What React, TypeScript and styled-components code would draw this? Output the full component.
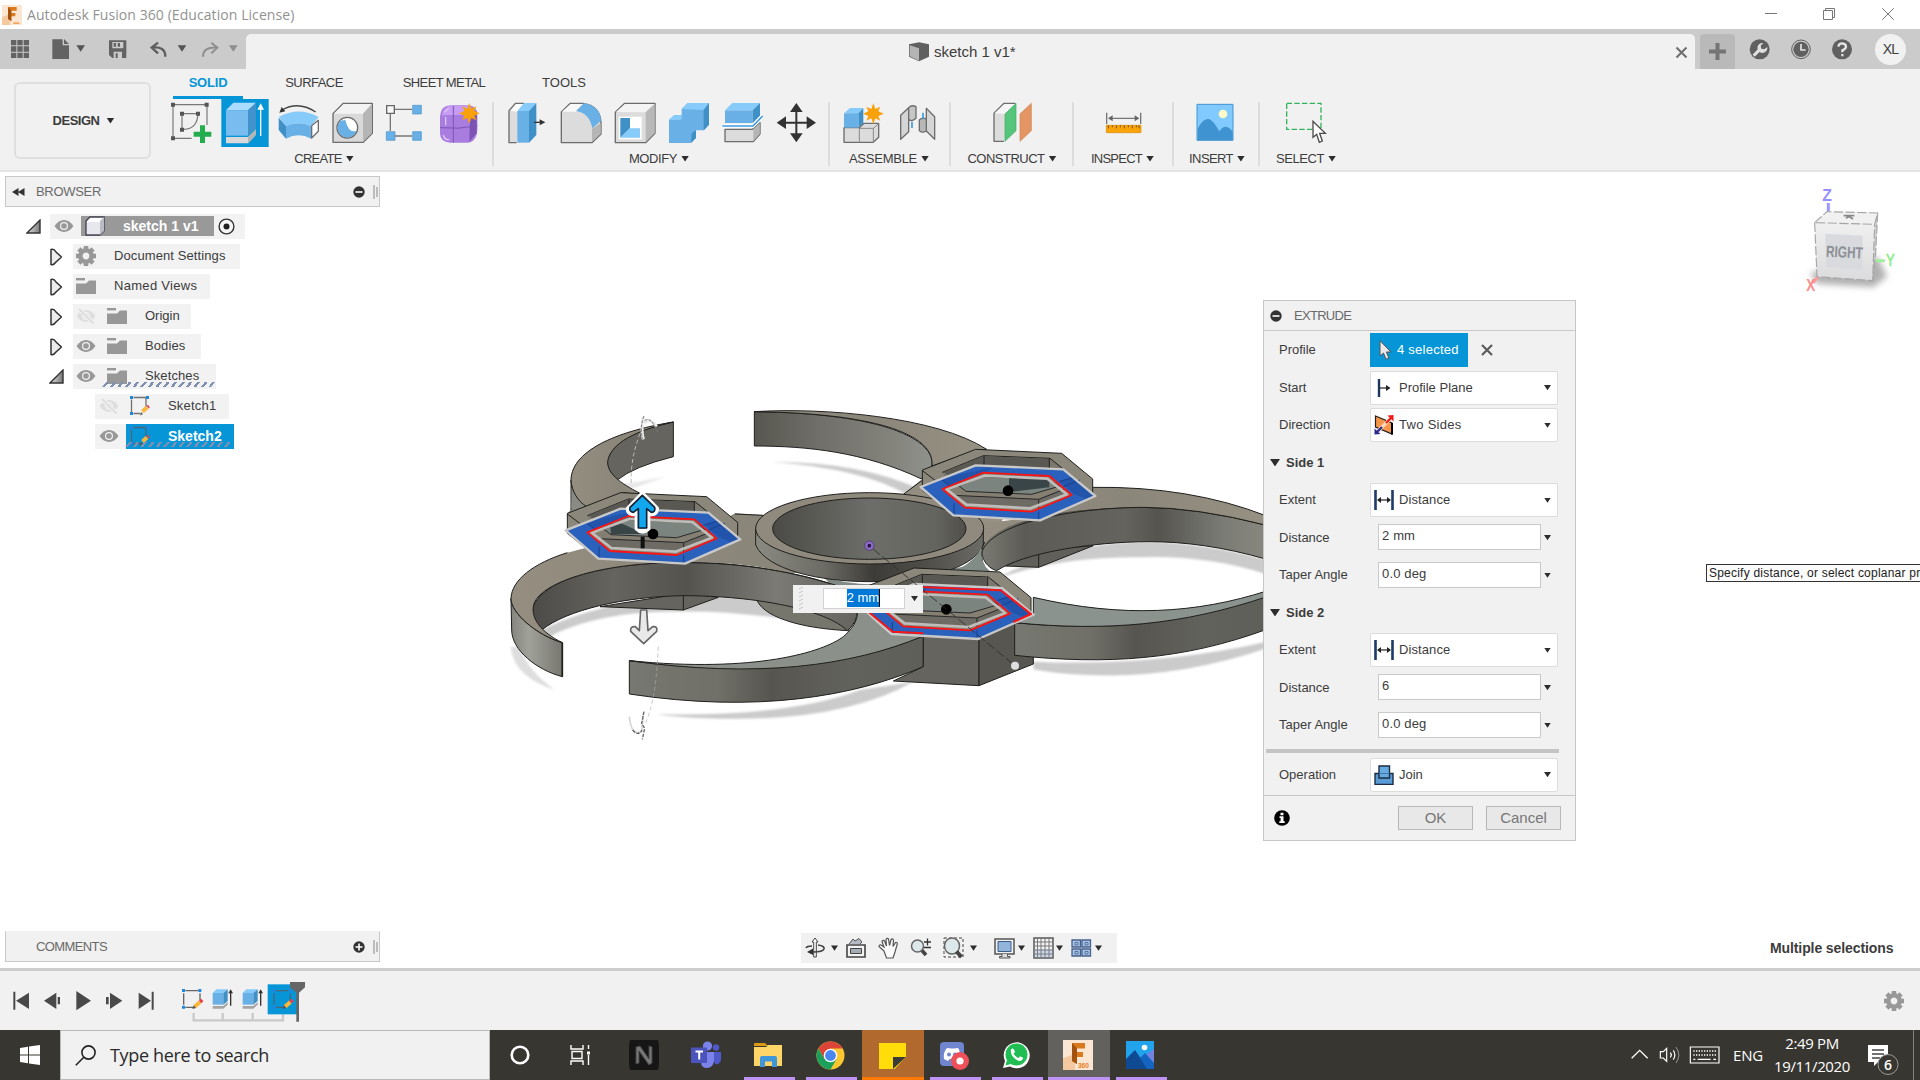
import React from "react";
import styled, { createGlobalStyle, css } from "styled-components";

const Global = createGlobalStyle`
  * { box-sizing: border-box; }
  html, body { margin: 0; padding: 0; overflow: hidden; background: #fff; }
  body { font-family: "Liberation Sans", Arial, sans-serif; font-size: 13px; color: #3c3c3c; }
  svg { display: block; flex: none; }
`;

const blue = "#0696d7";

const Screen = styled.div`
  width: 1920px;
  height: 1080px;
  display: flex;
  flex-direction: column;
  overflow: hidden;
  background: #fff;
`;

const Spring = styled.div`
  flex: 1;
`;

const Gap = styled.div<{ $w: number }>`
  width: ${(p) => p.$w}px;
  flex: none;
`;

const Label = styled.span<{ $size?: number; $track?: number; $bold?: boolean; $color?: string }>`
  font-size: ${(p) => p.$size ?? 13}px;
  letter-spacing: ${(p) => p.$track ?? 0}px;
  font-weight: ${(p) => (p.$bold ? 700 : 400)};
  color: ${(p) => p.$color ?? "#3c3c3c"};
  white-space: nowrap;
  line-height: 1.2;
`;

const Caret = styled.i<{ $s?: number; $color?: string }>`
  flex: none;
  width: ${(p) => (p.$s ?? 3.5) * 2}px;
  height: ${(p) => (p.$s ?? 3.5) * 1.5}px;
  background: ${(p) => p.$color ?? "#2d2d2d"};
  clip-path: polygon(0 0, 100% 0, 50% 100%);
`;

/* Title bar */

const TitleBar = styled.header`
  height: 29px;
  flex: none;
  display: flex;
  align-items: center;
  padding-left: 2px;
  background: #fff;
`;

const TitleText = styled.span`
  margin-left: 5px;
  font: 14px "Open Sans", sans-serif;
  letter-spacing: 0.07px;
  color: #929292;
  white-space: nowrap;
`;

/* Application bar */

const AppBar = styled.div`
  height: 40px;
  flex: none;
  display: flex;
  background: #cbcbcb;
`;

const QuickAccess = styled.div`
  width: 246px;
  height: 40px;
`;

const DocTab = styled.div`
  width: 1449px;
  margin-top: 5px;
  height: 35px;
  display: flex;
  align-items: center;
  padding: 1px 7px 0 663px;
  background: #f1f1f1;
  border-radius: 5px 5px 0 0;
`;

const NewTab = styled.div`
  width: 35px;
  height: 35px;
  margin: 5px 0 0 5px;
  border-radius: 4px 4px 0 0;
  background: #b9b9b9;
  display: grid;
  place-items: center;
`;

const AppIcons = styled.div`
  display: flex;
  align-items: center;
  padding-left: 14px;
`;

const Avatar = styled.div`
  width: 31px;
  height: 31px;
  margin-left: 21px;
  border-radius: 50%;
  background: #f1f1f1;
  display: grid;
  place-items: center;
`;

/* Ribbon */

const Ribbon = styled.section`
  height: 103px;
  flex: none;
  display: flex;
  background: #f1f1f1;
  border-bottom: 2px solid #e4e4e4;
`;

const Workspace = styled.button`
  width: 137px;
  height: 77px;
  margin: 13px 12px 0 14px;
  padding: 0 0 0 2px;
  border: 2px solid #dfdfdf;
  border-radius: 6px;
  background: #f1f1f1;
  display: flex;
  align-items: center;
  justify-content: center;
  gap: 7px;
  font-family: inherit;
`;

const RibbonMain = styled.div`
  display: flex;
  flex-direction: column;
`;

const TabRow = styled.nav`
  display: flex;
  height: 30px;
`;

const RibbonTab = styled.div<{ $w: number; $on?: boolean }>`
  width: ${(p) => p.$w}px;
  height: 30px;
  display: flex;
  justify-content: center;
  padding-top: 6px;
  ${(p) =>
    p.$on &&
    css`
      margin-left: 10px;
      border-bottom: 3px solid ${blue};
    `}
`;

const Groups = styled.div`
  display: flex;
  height: 71px;
  padding-left: 1px;
`;

const Group = styled.div<{ $w: number }>`
  width: ${(p) => p.$w}px;
  display: flex;
  flex-direction: column;
  align-items: center;
`;

const Tools = styled.div`
  display: flex;
  height: 48px;
`;

const GroupName = styled.div<{ $shift?: number }>`
  display: flex;
  align-items: center;
  gap: 4px;
  height: 25px;
  transform: translateX(${(p) => p.$shift ?? 0}px);
`;

const Divider = styled.div<{ $m: string }>`
  width: 2px;
  height: 64px;
  margin: ${(p) => p.$m};
  background: #dddddd;
`;

/* Canvas */

const Canvas = styled.main`
  position: relative;
  height: 796px;
  flex: none;
  background: #fff;
`;

const Overlay = styled.div<{ $x: number; $y: number }>`
  position: absolute;
  left: ${(p) => p.$x}px;
  top: ${(p) => p.$y}px;
`;

const PanelBar = styled.div<{ $open?: boolean }>`
  width: 375px;
  height: 31px;
  display: flex;
  align-items: center;
  padding: 0 1px 0 6px;
  background: #f1f1f1;
  border: 1px solid #c8c8c8;
  border-top-color: ${(p) => (p.$open ? "#f1f1f1" : "#c8c8c8")};
`;

const Tree = styled.div`
  display: flex;
  flex-direction: column;
  gap: 5px;
  padding-top: 7px;
`;

const TreeRow = styled.div<{ $pad: number }>`
  height: 25px;
  display: flex;
  padding-left: ${(p) => p.$pad}px;
`;

const TreeToggle = styled.div`
  width: 24px;
  display: flex;
  align-items: center;
`;

const TreeItem = styled.div<{ $w: number; $fill?: string; $in?: number }>`
  width: ${(p) => p.$w}px;
  display: flex;
  align-items: center;
  padding: 0 0 1px ${(p) => p.$in ?? 4}px;
  background: ${(p) => p.$fill ?? "#f2f2f2"};
  position: relative;
`;

const TreeName = styled.div<{ $fill?: string; $w?: number; $h?: number }>`
  height: ${(p) => p.$h ?? 24}px;
  ${(p) => p.$w && `width: ${p.$w}px;`}
  display: flex;
  align-items: center;
  gap: 18px;
  padding-left: ${(p) => (p.$fill ? 4 : 0)}px;
  background: ${(p) => p.$fill ?? "transparent"};
`;

const Hatch = styled.i<{ $x: number; $w: number }>`
  position: absolute;
  left: ${(p) => p.$x}px;
  bottom: 2px;
  width: ${(p) => p.$w}px;
  height: 5px;
  transform: skewX(-38deg);
  background: repeating-linear-gradient(90deg, #7f8fb0 0 3px, transparent 3px 7.6px);
`;

/* Extrude dialog */

const Dialog = styled.section`
  width: 313px;
  height: 541px;
  background: #f1f1f1;
  border: 1px solid #c6c6c6;
  display: flex;
  flex-direction: column;
`;

const DialogHead = styled.div`
  height: 30px;
  margin-bottom: 0.4px;
  display: flex;
  align-items: center;
  gap: 12px;
  padding-left: 6px;
  border-bottom: 1px solid #c8c8c8;
`;

const Field = styled.div`
  height: 37.5px;
  display: flex;
  align-items: center;
  padding-left: 15px;
`;

const FieldName = styled.div`
  width: 91px;
`;

const SectionHead = styled(Field)`
  padding-left: 6px;
  gap: 6px;
`;

const Select = styled.div`
  width: 188px;
  height: 34px;
  display: flex;
  align-items: center;
  justify-content: space-between;
  padding: 0 6px 0 3px;
  background: #fff;
  border: 1px solid #dcdcdc;
  border-radius: 2px;
`;

const SelectValue = styled.div`
  display: flex;
  align-items: center;
  gap: 5px;
`;

const Input = styled.div`
  width: 163px;
  height: 26px;
  margin: 0 3px 1px 8px;
  padding: 3px 0 0 3px;
  background: #fff;
  border: 1px solid #cacaca;
`;

const Picked = styled.div`
  width: 98px;
  height: 34px;
  margin-right: 13px;
  display: flex;
  align-items: center;
  gap: 5px;
  padding-left: 8px;
  background: ${blue};
`;

const Rule = styled.div`
  width: 293px;
  height: 4px;
  margin: 5px 0 3px 2px;
  background: #c4c4c4;
`;

const DialogFoot = styled.div`
  flex: 1;
  margin-top: 1.6px;
  display: flex;
  align-items: center;
  padding: 0 14px 0 10px;
  border-top: 1px solid #c8c8c8;
`;

const Button = styled.button`
  width: 75px;
  height: 24px;
  margin-left: 13px;
  padding: 0;
  border: 1px solid #b8b8b8;
  background: #e8e8e8;
  font: 15px "Liberation Sans", Arial, sans-serif;
  color: #777;
`;

const Hint = styled.div`
  width: 220px;
  height: 18px;
  padding: 1px 0 0 2px;
  border: 1px solid #333;
  background: #fbfbfb;
  white-space: nowrap;
  font-size: 12px;
  letter-spacing: 0.22px;
  line-height: 15px;
  color: #222;
`;

const MiniInput = styled.div`
  width: 130px;
  height: 28px;
  display: flex;
  align-items: center;
  padding: 0 0 1px 5px;
  background: #f1f1f1;
`;

const MiniField = styled.div`
  width: 82px;
  height: 21px;
  margin: 0 6px 0 19px;
  display: flex;
  justify-content: flex-end;
  padding: 0 24px 0 0;
  background: #fff;
  border: 1px solid #d2d2d2;
`;

const Marked = styled.span`
  height: 18px;
  background: #0078d7;
  border-right: 1px solid #000;
  color: #fff;
  font-size: 13px;
  letter-spacing: -0.05px;
  line-height: 18px;
`;

const NavBar = styled.div`
  width: 316px;
  height: 30px;
  display: flex;
  align-items: center;
  padding-left: 3px;
  background: #f1f1f1;
`;

const Timeline = styled.section`
  height: 62px;
  flex: none;
  display: flex;
  border-top: 3px solid #cdcdcd;
  background: #f1f1f1;
`;

/* Taskbar */

const Taskbar = styled.footer`
  height: 50px;
  flex: none;
  display: flex;
  background: #383631;
`;

const Start = styled.div`
  width: 60px;
  display: grid;
  place-items: center;
`;

const Search = styled.div`
  width: 430px;
  height: 50px;
  display: flex;
  align-items: center;
  gap: 14px;
  padding-left: 14px;
  background: #f1f1f1;
  border: 1px solid #b9b9b9;
  font: 18px "Open Sans", sans-serif;
  letter-spacing: -0.35px;
  color: #2a2a2a;
`;

const TaskButton = styled.div<{ $fill?: string; $bar?: string; $w?: number }>`
  width: 62px;
  height: 50px;
  padding-right: 2px;
  display: grid;
  place-items: center;
  background: linear-gradient(${(p) => p.$bar ?? "transparent"}, ${(p) => p.$bar ?? "transparent"}) center bottom /
    ${(p) => p.$w ?? 51}px 3px no-repeat ${(p) => p.$fill ?? "transparent"};
`;

const Tray = styled.div`
  display: flex;
  align-items: center;
  font: 15px "Open Sans", sans-serif;
  color: #fff;
`;

const TrayIcons = styled(Tray)`
  width: 92px;
`;

const Language = styled.span`
  width: 41px;
  padding-left: 10px;
  white-space: nowrap;
  letter-spacing: -0.2px;
`;

const Clock = styled.div`
  width: 96px;
  text-align: center;
  font-size: 15px;
  line-height: 23px;
  letter-spacing: -0.35px;
`;

type PicProps = { x: number; y: number; w: number; h: number; children: React.ReactNode };

/* Drawings share a grid of three units to the pixel. */
const Pic = ({ x, y, w, h, children }: PicProps) => (
  <svg width={w} height={h} viewBox={`${x} ${y} ${w * 3} ${h * 3}`} fill="none">
    {children}
  </svg>
);

const Tool = ({ x, children }: { x: number; children: React.ReactNode }) => (
  <Pic x={x} y={297} w={54} h={48}>
    {children}
  </Pic>
);

const Burst = ({ x, y }: { x: number; y: number }) => (
  <path
    transform={`translate(${x} ${y})`}
    fill="#f9a10a"
    d="M0-31 6-14 21-21 15-7 31 0 15 7 21 21 6 14 0 31-6 14-21 21-15 7-31 0-15-7-21-21-6-14Z"
  />
);

const line = { stroke: "#6d6d6d", strokeWidth: 4, strokeLinejoin: "round" as const };

const CreateTools = () => (
  <Tools>
    <Tool x={492}>
      <path d="M519 314H621V375M519 314V415H575M546 341H594M546 341V388M594 341Q592 386 552 388" stroke="#777" strokeWidth="3.5" />
      <path d="M513 308h12v12h-12zM614 308h12v12h-12zM513 409h12v12h-12zM540 335h12v12h-12zM588 335h12v12h-12zM540 383h12v12h-12z" fill="#555" />
      <path d="M600 376h15v19h19v15h-19v19h-15v-19h-19v-15h19z" fill="#23ad4e" />
    </Tool>
    <Tool x={654}>
      <path d="M664 290H806V441H664z" fill={blue} />
      <path d="M678 411H744L768 388V404L744 430H678z" fill="#d9d9d9" />
      <path d="M744 411 768 388V404L744 430z" fill="#b4b4b4" />
      <path d="M678 331H744V407H678z" fill="#79bdf0" />
      <path d="M678 331 700 308H768L744 331z" fill="#aadcff" />
      <path d="M744 331 768 308V385L744 407z" fill="#4292cc" />
      <path d="M782 408V318" stroke="#fff" strokeWidth="4" />
      <path d="M782 310 792 329H772z" fill="#fff" />
    </Tool>
    <Tool x={816}>
      <path d="M836 351Q896 318 956 351L933 378Q896 362 858 378z" fill="#86cbfa" />
      <path d="M858 378Q896 362 933 378V416Q896 396 858 416z" fill="#68b0e5" />
      <path d="M836 353 858 378V416L836 390z" fill="#4090c8" />
      <path d="M935 377 955 361V394L935 414z" fill="#fff" {...line} />
      <path d="M846 330Q895 302 947 336" stroke="#444" strokeWidth="4" />
      <path d="M838 338 845 321 856 334z" fill="#333" />
    </Tool>
    <Tool x={978}>
      <path d="M999 341 1030 310H1117V400L1090 427H999z" fill="#d9d9d9" {...line} />
      <path d="M1001 341 1031 312H1115L1088 341z" fill="#f3f3f3" />
      <path d="M1089 341 1116 312V399L1089 426z" fill="#b5b5b5" />
      <circle cx="1042" cy="383" r="31" fill="#fff" {...line} />
      <path d="M1022 362A29 29 0 1 0 1069 393Q1045 400 1036 360Z" fill="#68b0e5" />
    </Tool>
    <Tool x={1140}>
      <path d="M1184 328H1236M1171 342V393M1185 408H1236" stroke="#777" strokeWidth="4" />
      <path d="M1160 317h23v23h-23z" fill="#f8f8f8" stroke="#666" strokeWidth="4" />
      <path d="M1238 316h26v26h-26zM1159 395h26v26h-26zM1238 395h26v26h-26z" fill="#68b0e5" stroke="#4593ca" strokeWidth="2" />
    </Tool>
    <Tool x={1302}>
      <path d="M1320 348Q1323 316 1352 316H1404Q1432 318 1432 345V390Q1429 427 1402 428H1350Q1320 426 1320 400Z" fill="#a97de0" />
      <path d="M1326 347Q1330 318 1354 317H1400Q1420 320 1416 330L1405 345H1336z" fill="#c79cf4" />
      <path d="M1411 350 1430 333V400L1408 425z" fill="#7c53b4" />
      <path d="M1360 318V428M1320 383Q1375 389 1432 377M1411 340V408" stroke="#7c53b4" strokeWidth="3" />
      <path d="M1337 350v26M1330 405q3 15 18 14M1347 325l-14 12" stroke="#e0c4ff" strokeWidth="4" />
      <Burst x={1408} y={340} />
    </Tool>
  </Tools>
);

const ModifyTools = () => (
  <Tools>
    <Tool x={30}>
      <path d="M80 428H57V332L76 310H102" fill="#dcdcdc" {...line} />
      <path d="M62 332 80 312H104L82 335z" fill="#fff" />
      <path d="M82 333 102 309H139L117 333z" fill="#86cbfa" />
      <path d="M82 333H117V428H82z" fill="#68b0e5" />
      <path d="M117 333 139 309V405L117 428z" fill="#4090c8" />
      <path d="M132 367H152" stroke="#333" strokeWidth="4" />
      <path d="M166 367 149 358V376z" fill="#333" />
    </Tool>
    <Tool x={192}>
      <path d="M214 336 241 310H280Q332 318 333 370V402L306 428H214z" fill="#dcdcdc" {...line} />
      <path d="M216 335 242 312H282L260 335z" fill="#f8f8f8" />
      <path d="M306 386 332 370V401L306 426z" fill="#b5b5b5" />
      <path d="M258 333 282 309Q332 320 333 362L307 385Q298 338 258 333Z" fill="#68b0e5" />
    </Tool>
    <Tool x={354}>
      <path d="M376 337 404 310H495V400L467 428H376z" fill="#dcdcdc" {...line} />
      <path d="M378 336 405 312H493L466 337z" fill="#f4f4f4" />
      <path d="M467 337 494 312V400L467 426z" fill="#b8b8b8" />
      <path d="M386 350h69v68h-69z" fill="#fff" />
      <path d="M391 354h29v31l-29 28z" fill="#4090c8" />
      <path d="M420 385h30v28h-59z" fill="#86cbfa" />
    </Tool>
    <Tool x={516}>
      <path d="M537 360 552 346H575V327L593 309H657V374L642 391H618V414L602 429H537z" fill="#68b0e5" />
      <path d="M537 360 552 346H577L573 360zM575 327 593 309H657L641 330z" fill="#86cbfa" />
      <path d="M641 330 657 310V374L641 391zM605 400 618 391V414L603 429z" fill="#4090c8" />
    </Tool>
    <Tool x={678}>
      <path d="M705 331 727 309H810L788 331z" fill="#86cbfa" />
      <path d="M705 331H788V369H705z" fill="#68b0e5" />
      <path d="M788 331 810 309V347L788 369z" fill="#4090c8" />
      <path d="M705 388H788L810 368V402L790 425H705z" fill="#dcdcdc" {...line} />
      <path d="M790 388 809 369V402L790 424z" fill="#b5b5b5" />
      <path d="M697 378H789L818 348" stroke="#fff" strokeWidth="11" />
      <path d="M697 378H789L818 348" stroke="#3d9be0" strokeWidth="5" />
    </Tool>
    <Tool x={840}>
      <path d="M919 325V412M876 368H962" stroke="#333" strokeWidth="6" />
      <path d="M919 309 938 336H900zM919 427 938 400H900zM860 368 888 349V387zM978 368 950 349V387z" fill="#333" />
    </Tool>
  </Tools>
);

const AssembleTools = () => (
  <Tools>
    <Tool x={1038}>
      <path d="M1062 383H1108L1122 370H1166V412L1150 427H1062z" fill="#dcdcdc" {...line} />
      <path d="M1108 384V427M1108 385H1150L1166 371M1150 385V427" stroke="#888" strokeWidth="3" />
      <path d="M1062 340 1080 324H1120L1106 342z" fill="#86cbfa" />
      <path d="M1062 340H1106V383H1062z" fill="#68b0e5" />
      <path d="M1106 340 1120 324V370L1106 383z" fill="#4090c8" />
      <Burst x={1150} y={341} />
    </Tool>
    <Tool x={1200}>
      <path d="M1232 346 1256 323V395L1232 418z" fill="#d5d5d5" {...line} />
      <path d="M1256 323Q1265 313 1278 320V355Q1267 366 1256 359z" fill="#c6c6c6" {...line} />
      <path d="M1309 325 1334 350V418L1309 393z" fill="#d5d5d5" {...line} />
      <path d="M1288 360Q1298 350 1309 358V393Q1298 400 1288 392z" fill="#b8b8b8" {...line} />
      <path d="M1266 365V384M1299 338V358" stroke="#3d9be0" strokeWidth="5" />
    </Tool>
  </Tools>
);

const Eye = ({ off }: { off?: boolean }) => (
  <svg width="20" height="16" viewBox="0 0 20 16">
    <path d="M.5 8Q4.500 2.200 10 2 15.500 2.200 19.500 8 15.500 13.800 10 14 4.500 13.800.5 8Z" fill={off ? "#dedede" : "#989898"} />
    <circle cx="10" cy="8" r="4" fill="#f2f2f2" />
    <circle cx="10" cy="8" r="2.800" fill={off ? "#dedede" : "#989898"} />
    {off && <path d="M2 0 18 16" stroke="#f2f2f2" strokeWidth="4" />}
    {off && <path d="M3 1 17.500 15.500" stroke="#dedede" strokeWidth="2" />}
  </svg>
);

const Folder = () => (
  <svg width="20" height="16" viewBox="0 0 20 16">
    <path d="M0 5.500H10L13 2.500H20V16H0z" fill="#989898" />
    <path d="M0 1.200H9" stroke="#989898" strokeWidth="2.400" />
  </svg>
);

const GearShape = () => (
  <>
    {[0, 45, 90, 135].map((a) => (
      <path key={a} d="M-2.300-10H2.300V10H-2.300z" fill="#989898" transform={`rotate(${a})`} />
    ))}
    <circle r="5.600" stroke="#989898" strokeWidth="4.400" fill="#f1f1f1" />
  </>
);

const Gear = () => (
  <svg width="20" height="20" viewBox="-10 -10 20 20">
    <GearShape />
  </svg>
);

const SketchIcon = ({ sel }: { sel?: boolean }) => (
  <svg width="20" height="20" viewBox="0 0 20 20" fill="none">
    <path d="M3.500 1.500H16V11M1.500 3.500V16.500M3.500 17.500H10" stroke={sel ? "#47687c" : "#707070"} strokeWidth="1.300" />
    <path d="M0 0h3v3H0zM16 0h3v3h-3zM0 16h3v3H0z" fill="#2186dd" />
    <path d="M12.500 15.500 17 11.500" stroke="#fbb738" strokeWidth="4" />
    <path d="M17.500 11 19 10.200" stroke="#ec3c4a" strokeWidth="3.500" />
    <path d="M10 19.500 11 16 13 18z" fill="#555" />
  </svg>
);

const Collapsed = () => (
  <svg width="13" height="18" viewBox="0 0 13 18">
    <path d="M2 1.500Q5 .5 7 4L12.500 9 7 14Q4.500 17.500 2 16.500Z" fill="#ededed" stroke="#333" strokeWidth="1.500" />
  </svg>
);

const Expanded = () => (
  <svg width="15" height="15" viewBox="0 0 15 15">
    <defs>
      <linearGradient id="tri" x1="0" x2="1">
        <stop offset="0" stopColor="#e8e8e8" />
        <stop offset="1" stopColor="#777" />
      </linearGradient>
    </defs>
    <path d="M1 14H14V1z" fill="url(#tri)" stroke="#333" strokeWidth="1.400" />
  </svg>
);

const RoundSign = ({ plus }: { plus?: boolean }) => (
  <svg width="12" height="12" viewBox="0 0 12 12">
    <circle cx="6" cy="6" r="5.700" fill="#333" />
    <path d={plus ? "M2.500 6H9.500M6 2.500V9.500" : "M2.500 6H9.500"} stroke="#fff" strokeWidth="1.600" />
  </svg>
);

const Grip = () => (
  <svg width="5" height="14" viewBox="0 0 5 14">
    <path d="M1 0V14M4 2V12" stroke="#888" strokeWidth="1" />
  </svg>
);

const Pointer = () => (
  <svg width="14" height="20" viewBox="0 0 14 20">
    <path d="M2 .8V16L5.500 13 8 19.200 10.800 18 8.400 12H13z" fill="#e8e8e8" stroke="#555" />
  </svg>
);

const PlaneIcon = () => (
  <svg width="20" height="20" viewBox="0 0 20 20" fill="none">
    <path d="M5 1V19" stroke="#1f3558" strokeWidth="2.400" />
    <path d="M6 10H13" stroke="#222" strokeWidth="1.200" />
    <path d="M16.500 10 12 7V13z" fill="#222" />
  </svg>
);

const SpanIcon = () => (
  <svg width="20" height="20" viewBox="0 0 20 20" fill="none">
    <path d="M1.500 0V20M18.500 0V20" stroke="#1f3a66" strokeWidth="2.600" />
    <path d="M5 10H15" stroke="#222" strokeWidth="1.200" />
    <path d="M17 10 13 7V13zM3 10 7 7V13z" fill="#222" />
  </svg>
);

const SidesIcon = () => (
  <svg width="20" height="20" viewBox="0 0 20 20" fill="none">
    <path d="M1.500 1 18 8V19L1.500 12z" fill="#f79548" stroke="#222" strokeWidth="1.200" />
    <path d="M18 8V19.500" stroke="#000" strokeWidth="2" />
    <path d="M4 16 16 4" stroke="#ffd7b8" strokeWidth="3.500" />
    <path d="M12 8 17 3" stroke="#f01818" strokeWidth="2.200" />
    <path d="M19.500 0V6.500L13.500 .5z" fill="#f01818" />
    <path d="M8 12 3 17" stroke="#2a2a90" strokeWidth="2.200" />
    <path d="M.5 19.500V13.500L6.500 19z" fill="#2a2a90" />
  </svg>
);

const JoinIcon = () => (
  <svg width="20" height="20" viewBox="0 0 20 20" fill="none">
    <path d="M1 8.500H19V19.500H1z" fill="#5a9bd5" stroke="#1b2d44" strokeWidth="1.400" />
    <path d="M5 1H15.500V13H5z" fill="#67abe2" stroke="#1b2d44" strokeWidth="1.400" />
    <path d="M5 8.500H15.500" stroke="#3c78ae" />
  </svg>
);

/* Pocket with hexagonal rim; dx and dy move it from the rear pocket to each lobe. */
const HexPocket = ({ dx, dy, edge, wedge }: { dx: number; dy: number; edge?: boolean; wedge?: string }) => (
  <g transform={`translate(${1110 + dx} ${dy})`} strokeLinejoin="round">
    <path d="M187 270 347 208 605 220 698 297V345L540 420 280 405 187 330Z" fill="#8b877a" stroke="#1f1f1d" strokeWidth="3" />
    <path d="M247 277 370 227 570 235 650 300 536 360 282 346Z" fill="#7b796f" />
    <path d="M247 277 370 227 570 235 650 300" stroke="#1f1f1d" strokeWidth="3" fill="none" />
    <path d="M250 276 370 228 568 236V290L372 280 290 306z" fill="#595853" />
    <path d="M372 228V265M568 236V275M187 272 240 312" stroke="#1f1f1d" strokeWidth="3" />
    <path
      fillRule="evenodd"
      fill="#2a61bd"
      d="M183 322 347 258 610 270 705 347 540 420 280 405ZM247 327 370 278 568 288 635 345 515 395 315 383Z"
    />
    <path d="M247 300 290 285 400 262 372 280 300 308 268 318ZM598 303 640 292 705 347 680 358 640 340Z" fill="#1d4a9c" fillOpacity=".55" />
    <path d="M240 296 275 322M598 305 640 292M610 320 660 300M282 370V400M536 395V415" stroke="#173f8c" strokeWidth="3" />
    <path d="M255 328 372 286 565 294 627 344 512 388 318 377Z" fill="#857f72" />
    <path d="M297 318 368 290 562 296 600 318 515 343 318 334Z" fill="#7b847f" stroke="#26282a" strokeWidth="3" />
    {wedge && <path d={wedge} fill="#3a4547" />}
    <path d="M282 346 536 358 612 328 627 344 512 388 318 377Z" fill="#6d6b64" />
    <path d="M282 346 536 358 612 328M536 358V384" stroke="#26282a" strokeWidth="3" fill="none" />
    <path d="M182 321 347 256 610 268 706 348 540 421 280 406Z" stroke="#c9c9ca" strokeWidth="7" fill="none" />
    {edge && <path d="M190 323 348 264 607 275 698 346 645 370M190 323 283 399 375 404" stroke="#fb1414" strokeWidth="6" fill="none" />}
    <path d="M260 328 373 287 562 296 621 343 511 385 319 374Z" stroke="#bfbdb9" strokeWidth="8" fill="none" />
    <path d="M247 327 370 278 568 288 635 345 515 395 315 383Z" stroke="#fb1414" strokeWidth="5.500" fill="none" />
    <circle cx="444" cy="332" r="16" fill="#000" />
  </g>
);

const ink = { stroke: "#1f1f1d", strokeWidth: 3, strokeLinejoin: "round" as const };

const Model = () => (
  <svg width="784" height="370" viewBox="0 0 2352 1110" fill="none">
    <defs>
      <linearGradient id="wall" x1="0" x2="1">
        <stop offset="0" stopColor="#777871" />
        <stop offset=".3" stopColor="#706f68" />
        <stop offset=".48" stopColor="#57554f" />
        <stop offset=".75" stopColor="#62625c" />
        <stop offset="1" stopColor="#5e5f58" />
      </linearGradient>
      <linearGradient id="wallBack" x1="0" x2="1">
        <stop offset="0" stopColor="#57564f" />
        <stop offset=".35" stopColor="#6f6e68" />
        <stop offset=".8" stopColor="#85857e" />
        <stop offset="1" stopColor="#8f928c" />
      </linearGradient>
      <linearGradient id="wallInner" x1="0" x2="1">
        <stop offset="0" stopColor="#4c4b48" />
        <stop offset=".25" stopColor="#66645e" />
        <stop offset=".47" stopColor="#55534e" />
        <stop offset=".75" stopColor="#7b7a74" />
        <stop offset="1" stopColor="#65645e" />
      </linearGradient>
      <linearGradient id="wallRight" x1="0" x2="1">
        <stop offset="0" stopColor="#7a7a72" />
        <stop offset=".15" stopColor="#5c5b56" />
        <stop offset=".5" stopColor="#64635d" />
        <stop offset=".62" stopColor="#55544f" />
        <stop offset=".85" stopColor="#7c7c76" />
        <stop offset="1" stopColor="#88887f" />
      </linearGradient>
      <linearGradient id="bore" x1="0" x2="1">
        <stop offset="0" stopColor="#4b4a46" />
        <stop offset=".5" stopColor="#6d6e69" />
        <stop offset=".85" stopColor="#64645e" />
        <stop offset="1" stopColor="#4f4e4a" />
      </linearGradient>
      <linearGradient id="collar" x1="0" x2="1">
        <stop offset="0" stopColor="#8b8b82" />
        <stop offset=".3" stopColor="#6c6b64" />
        <stop offset=".52" stopColor="#3d3b37" />
        <stop offset=".8" stopColor="#55534e" />
        <stop offset="1" stopColor="#6c6b65" />
      </linearGradient>
      <linearGradient id="tip" x1="0" x2="1">
        <stop offset="0" stopColor="#85857d" />
        <stop offset=".35" stopColor="#a0a198" />
        <stop offset="1" stopColor="#77776f" />
      </linearGradient>
      <linearGradient id="top" x1="0" x2="1">
        <stop offset="0" stopColor="#948d80" />
        <stop offset=".5" stopColor="#8b867a" />
        <stop offset="1" stopColor="#979183" />
      </linearGradient>
      <filter id="soft" x="-5%" y="-20%" width="110%" height="140%">
        <feGaussianBlur stdDeviation="3" />
      </filter>
    </defs>

    <g fill="#cbcbcb" filter="url(#soft)">
      <path d="M850 246Q1110 245 1296 330L1250 343Q1110 265 850 246Z" />
      <path d="M380 312Q440 310 530 288Q450 320 400 332Z" fill="#e6e6e6" />
      <path d="M155 750C300 680 450 655 600 655Q680 640 800 660L870 715Q700 690 540 695C380 695 250 730 180 770Z" />
      <path d="M62 800Q70 890 195 930Q110 870 90 800Z" fill="#dedede" />
      <path d="M500 1003Q900 1010 1110 930L1270 905Q1050 1030 650 1015Q560 1012 500 1003Z" />
      <path d="M1540 585Q1750 480 2010 485Q2200 500 2330 540V583Q2150 525 1950 532Q1720 530 1540 590Z" />
      <path d="M1630 845Q2000 860 2330 785V805Q2050 900 1780 884Q1700 882 1630 868Z" />
    </g>

    {/* upper left claw */}
    <path d="M550 126V230Q430 260 382 300Q345 270 353 235Q380 160 550 126Z" fill="#65645e" {...ink} />
    <path d="M243 300Q243 345 300 385L232 402L245 385Z" fill="#8a8b84" />
    <path d="M243 300V390M243 300Q243 340 290 380" {...ink} />
    <path d="M550 126C400 150 245 205 243 300C245 335 265 365 290 380L400 338L460 345C400 315 352 285 353 245C360 190 440 150 550 126Z" fill="url(#top)" {...ink} />

    {/* upper right claw */}
    <path d="M793 95V198C950 198 1120 215 1295 297L1326 258C1335 180 1190 100 793 95Z" fill="url(#wallBack)" {...ink} />
    <path d="M793 95C1000 82 1340 110 1490 208L1460 210L1326 258C1335 170 1180 100 793 95Z" fill="url(#top)" {...ink} />

    {/* hub and lower left claw */}
    <path d="M330 680 580 690 685 652 580 640Z" fill="#66645e" {...ink} />
    <path d="M580 645V690" {...ink} />
    <path d="M797 650C810 710 930 745 1075 752L1100 700L1000 640Z" fill="#77766d" {...ink} />
    <path d="M155 750C50 640 270 548 570 548C760 545 930 580 1050 620L1103 690Q1100 730 1072 752C1010 690 800 647 580 647C400 650 230 690 155 750Z" fill="url(#wallInner)" {...ink} />
    <path d="M1000 590Q1160 640 1310 580L1480 550 1490 570 1250 600 1140 700 1100 700Z" fill="#818a85" />
    <path d="M63 655C63 700 140 765 217 788V890C140 870 65 810 65 750Z" fill="url(#tip)" {...ink} />
    <path
      d="M232 518C130 550 65 600 63 655C63 700 140 765 217 788C150 755 125 715 130 680C135 620 300 548 570 548C700 545 800 555 900 580L1250 560 1480 500 1540 416 1320 330 1297 297 1240 343 820 405 735 400 600 480 300 500Z"
      fill="url(#top)"
    />
    <path d="M232 518C130 550 65 600 63 655C63 700 140 765 217 788C150 755 125 715 130 680C135 620 300 548 570 548C760 545 930 580 1050 620M735 402 820 406M1240 343 1295 302" {...ink} />
    <path d="M217 788V890" stroke="#1f1f1d" strokeWidth="5" />

    {/* right loop */}
    <path d="M1547 558 1646 562 1810 497 1646 510Z" fill="#605f59" {...ink} />
    <path d="M1646 515V562" {...ink} />
    <path d="M1520 572C1480 560 1460 510 1490 480C1560 400 1800 382 1960 382Q2120 382 2330 436V538C2200 500 2080 485 1980 485C1800 485 1600 520 1520 572Z" fill="url(#wallRight)" {...ink} />
    <path d="M1808 322Q2100 318 2330 408V436Q2120 382 1960 382C1800 382 1560 400 1485 490L1480 430 1650 410Z" fill="url(#top)" />
    <path d="M1808 322Q2100 318 2330 408M2330 436Q2120 382 1960 382C1740 384 1500 430 1474 520Q1474 550 1490 574" {...ink} />

    {/* bearing collar */}
    <path d="M797 446V495C830 570 990 605 1140 605S1450 570 1480 495V446Z" fill="url(#collar)" {...ink} />
    <path d="M1400 570Q1460 540 1474 500Q1470 550 1500 574Z" fill="#818c86" />
    <ellipse cx="1139" cy="445" rx="342" ry="107" fill="#8f8a7d" {...ink} />
    <ellipse cx="1138" cy="446" rx="290" ry="92" fill="url(#bore)" {...ink} />

    {/* lower arm */}
    <path d="M418 842V942C800 1000 1090 950 1300 860V768C1100 850 800 895 418 842Z" fill="url(#wall)" {...ink} />
    <path d="M418 842C800 880 1000 815 1060 770C1100 735 1105 710 1102 680L1140 680 1215 755 1300 768C1080 860 800 895 418 842Z" fill="#8b908a" {...ink} />

    {/* lower right arm */}
    <path d="M1210 903 1300 860V750L1467 775V917Z" fill="#65645f" {...ink} />
    <path d="M1467 775 1630 700V852L1467 917Z" fill="#575650" {...ink} />
    <path d="M1574 728C1850 755 2080 735 2330 645V748C2080 840 1850 855 1574 826Z" fill="url(#wall)" {...ink} />
    <path d="M1630 652C1900 715 2120 700 2330 633V650C2080 735 1850 755 1574 728L1630 700Z" fill="#8b938e" {...ink} />

    <HexPocket dx={0} dy={0} wedge="M447 288 568 297V322L447 336Z" />
    <HexPocket dx={-1065} dy={130} wedge="M315 302 345 298 420 332 318 332Z" />
    <HexPocket dx={-185} dy={356} edge />

    <path d="M1148 506 1575 857" stroke="#2c2c2c" strokeWidth="2.500" strokeDasharray="28 9" />
    <circle cx="1138" cy="497" r="14" fill="#8f6ac6" />
    <circle cx="1138" cy="497" r="14" stroke="#3c2a63" strokeWidth="2" />
    <circle cx="1138" cy="497" r="5.500" fill="#20173a" />
    <circle cx="1575" cy="857" r="12" fill="#dedede" />

    {/* distance manipulators */}
    <path d="M458 470V505" stroke="#111" strokeWidth="12" />
    <path d="M457 342 500 385Q500 402 484 402L474 396V446Q457 462 441 446V396L430 402Q412 400 415 385Z" fill="#12a7ee" stroke="#fff" strokeWidth="14" strokeLinejoin="round" />
    <path d="M457 346 494 382Q497 396 484 397L470 386V444H445V386L430 397Q417 395 420 382Z" fill="#12a7ee" stroke="#123" strokeWidth="5" strokeLinejoin="round" />
    <path d="M452 690H470L474 752L488 740Q504 738 500 754L461 791 422 754Q420 738 436 740L448 752Z" fill="#e9e9e9" stroke="#666" strokeWidth="5" strokeLinejoin="round" />
    <path d="M460 110Q452 145 460 178M463 130Q480 110 500 140" stroke="#e9e9e9" strokeWidth="9" />
    <path d="M462 108Q448 145 458 176M464 122Q482 106 505 160" stroke="#777" strokeWidth="3" strokeDasharray="9 4" />
    <path d="M450 160Q420 240 424 310" stroke="#bbb" strokeWidth="3" strokeDasharray="12 8" />
    <path d="M505 800Q500 900 490 950 480 1000 466 1030" stroke="#aaa" strokeWidth="2" strokeDasharray="12 8" />
    <path d="M418 1010Q424 1070 455 1055L460 1000" stroke="#d6d6d6" strokeWidth="5" />
    <path d="M462 995 455 1030 464 1045 457 1078M428 1050Q445 1070 456 1050" stroke="#666" strokeWidth="4" strokeDasharray="10 4" />
  </svg>
);

const ViewCube = () => (
  <Pic x={1130} y={550} w={110} h={120}>
    <defs>
      <linearGradient id="cubeFace" x1="0" x2="0" y1="0" y2="1">
        <stop offset="0" stopColor="#f0f0f0" />
        <stop offset="1" stopColor="#dbdbdd" />
      </linearGradient>
      <filter id="cubeShadow" x="-20%" y="-40%" width="140%" height="180%">
        <feGaussianBlur stdDeviation="10" />
      </filter>
    </defs>
    <path d="M1170 820 1370 770 1400 830 1360 862 1190 852Z" fill="#b0b0b0" filter="url(#cubeShadow)" />
    <path d="M1183 669 1220 636 1372 640 1363 674Z" fill="#f1f1f1" />
    <path d="M1363 674 1372 640 1366 760 1357 843Z" fill="#cfcfcf" />
    <path d="M1183 669 1363 674 1357 843 1190 831Z" fill="url(#cubeFace)" />
    <path d="M1215 702 1327 708 1325 811 1218 802Z" fill="#d8dade" />
    <path d="M1183 669 1220 636 1372 640 1363 674ZM1183 669 1190 831 1357 843 1363 674M1372 640 1366 760 1357 843" stroke="#a6a6a6" strokeWidth="3.500" strokeDasharray="28 7" />
    <path d="M1270 648H1302M1277 656 1285 650 1298 658" stroke="#888" strokeWidth="5" />
    <path d="M1224 610V634" stroke="#9c96ff" strokeWidth="9" />
    <path d="M1366 783H1394" stroke="#9df09a" strokeWidth="8" />
    <path d="M1192 833 1178 849" stroke="#f99" strokeWidth="9" />
    <g fontFamily="Liberation Sans" fontWeight="700">
      <text x="1216" y="771" fontSize="48" fill="#8d9096" textLength="111" lengthAdjust="spacingAndGlyphs" transform="rotate(3 1216 771)">RIGHT</text>
      <text x="1206" y="605" fontSize="51" fill="#958fff" textLength="29" lengthAdjust="spacingAndGlyphs">Z</text>
      <text x="1397" y="799" fontSize="50" fontWeight="400" fill="#8bed88" stroke="#8bed88" strokeWidth="2" textLength="26" lengthAdjust="spacingAndGlyphs">Y</text>
      <text x="1158" y="875" fontSize="51" fill="#fb8a8a" textLength="27" lengthAdjust="spacingAndGlyphs">X</text>
    </g>
  </Pic>
);

type RowData = { w: number; name: string; kind: "gear" | "folder"; eye?: "on" | "off"; open?: boolean; track?: number };

const rows: RowData[] = [
  { w: 167, name: "Document Settings", kind: "gear", track: 0.1 },
  { w: 137, name: "Named Views", kind: "folder", track: 0.3 },
  { w: 118, name: "Origin", kind: "folder", eye: "off" },
  { w: 128, name: "Bodies", kind: "folder", eye: "on", track: 0.1 },
  { w: 143, name: "Sketches", kind: "folder", eye: "on", open: true, track: 0.1 },
];

const BrowserTree = () => (
  <Tree>
    <TreeRow $pad={21}>
      <TreeToggle><Expanded /></TreeToggle>
      <TreeItem $w={195}>
        <Eye />
        <Gap $w={7} />
        <TreeName $fill="#999" $w={133} $h={20}>
          <svg width="20" height="20" viewBox="0 0 20 20">
            <path d="M1 5 5 1H19V15L15 19H1Z" fill="#fff" stroke="#445" strokeWidth="1.400" />
            <path d="M15 5 19 1V15L15 19Z" fill="#b9bcc4" />
            <path d="M2 6H15V18H2z" fill="#e6e8ee" />
          </svg>
          <Label $bold $size={14} $color="#fff">sketch 1 v1</Label>
        </TreeName>
        <Gap $w={4} />
        <svg width="17" height="17" viewBox="0 0 17 17">
          <circle cx="8.500" cy="8.500" r="7.400" fill="#f8f8f8" stroke="#333" strokeWidth="1.400" />
          <circle cx="8.500" cy="8.500" r="3" fill="#222" />
        </svg>
      </TreeItem>
    </TreeRow>
    {rows.map((r) => (
      <TreeRow key={r.name} $pad={44}>
        <TreeToggle>{r.open ? <Expanded /> : <Collapsed />}</TreeToggle>
        <TreeItem $w={r.w} $in={3}>
          {r.eye && <Eye off={r.eye === "off"} />}
          {r.eye && <Gap $w={11} />}
          <TreeName>
            {r.kind === "gear" ? <Gear /> : <Folder />}
            <Label $track={r.track}>{r.name}</Label>
          </TreeName>
          {r.open && <Hatch $x={31} $w={109} />}
        </TreeItem>
      </TreeRow>
    ))}
    <TreeRow $pad={90}>
      <TreeItem $w={134}>
        <Eye off />
        <Gap $w={11} />
        <TreeName><SketchIcon /><Label $track={0.2}>Sketch1</Label></TreeName>
      </TreeItem>
    </TreeRow>
    <TreeRow $pad={90}>
      <TreeItem $w={31}><Eye /></TreeItem>
      <TreeItem $w={108} $fill={blue}>
        <TreeName><SketchIcon sel /><Label $bold $size={14} $color="#fff">Sketch2</Label></TreeName>
        <Hatch $x={1} $w={102} />
      </TreeItem>
    </TreeRow>
  </Tree>
);

const Choice = ({ name, icon, value, track }: { name: string; icon: React.ReactNode; value: string; track?: number }) => (
  <Field>
    <FieldName><Label>{name}</Label></FieldName>
    <Select>
      <SelectValue>{icon}<Label $track={track}>{value}</Label></SelectValue>
      <Caret />
    </Select>
  </Field>
);

const Entry = ({ name, value }: { name: string; value: string }) => (
  <Field>
    <FieldName><Label>{name}</Label></FieldName>
    <Input><Label $size={13} $track={0.15}>{value}</Label></Input>
    <Caret />
  </Field>
);

const ExtrudeDialog = () => (
  <Dialog>
    <DialogHead><RoundSign /><Label $track={-0.7} $color="#6a6a6a">EXTRUDE</Label></DialogHead>
    <Field>
      <FieldName><Label>Profile</Label></FieldName>
      <Picked><Pointer /><Label $color="#fff" $track={0.25}>4 selected</Label></Picked>
      <svg width="12" height="12" viewBox="0 0 12 12"><path d="M1 1 11 11M11 1 1 11" stroke="#5c5c5c" strokeWidth="2.200" /></svg>
    </Field>
    <Choice name="Start" icon={<PlaneIcon />} value="Profile Plane" />
    <Choice name="Direction" icon={<SidesIcon />} value="Two Sides" track={0.3} />
    <SectionHead><Caret $s={5} /><Label $bold>Side 1</Label></SectionHead>
    <Choice name="Extent" icon={<SpanIcon />} value="Distance" track={0.1} />
    <Entry name="Distance" value="2 mm" />
    <Entry name="Taper Angle" value="0.0 deg" />
    <SectionHead><Caret $s={5} /><Label $bold>Side 2</Label></SectionHead>
    <Choice name="Extent" icon={<SpanIcon />} value="Distance" track={0.1} />
    <Entry name="Distance" value="6" />
    <Entry name="Taper Angle" value="0.0 deg" />
    <Rule />
    <Choice name="Operation" icon={<JoinIcon />} value="Join" />
    <DialogFoot>
      <svg width="16" height="16" viewBox="0 0 16 16">
        <circle cx="8" cy="8" r="7.800" fill="#000" />
        <path d="M6.500 2.800H9.500V5.200H6.500zM5.500 6.300H9.500V11.300H10.700V13H5.300V11.300H6.600V8H5.500z" fill="#fff" />
      </svg>
      <Spring />
      <Button>OK</Button>
      <Button>Cancel</Button>
    </DialogFoot>
  </Dialog>
);

const NavTools = () => (
  <NavBar>
    <svg width="22" height="22" viewBox="0 0 22 22" fill="none">
      <path d="M11 1 14 5H12.300V20H9.700V5H8z" fill="#fff" stroke="#444" />
      <path d="M14 8Q21 9 20 12T9 15M8 9Q3 9 2 11" stroke="#444" strokeWidth="1.600" />
      <path d="M3 15 9 11.500V18z" fill="#333" />
    </svg>
    <Gap $w={5} /><Caret /><Gap $w={8} />
    <svg width="20" height="22" viewBox="0 0 20 22" fill="none">
      <path d="M1 8H19V20H1z" fill="#f3f3f3" stroke="#444" strokeWidth="1.600" />
      <path d="M4.500 11.500H15.500V16.500H4.500z" fill="#a6adb6" stroke="#444" />
      <path d="M3 7 7 2 9 4 13 1.500 16 5 14 7" fill="#b3bac4" stroke="#555" />
    </svg>
    <Gap $w={12} />
    <svg width="21" height="22" viewBox="0 0 21 22">
      <path d="M6 14 1 9.500Q1 7.500 3 8L6 10 4 4.500Q5 2.500 6.500 4L8.500 9 8 2.500Q9 .5 10.500 2L11.500 8.500 13 2.500Q14.500 1 15.500 3L15 9.500 17.500 5.500Q19.500 5 19.300 7L17 15 15 21H8.500Z" fill="#fafafa" stroke="#555" strokeWidth="1.200" />
    </svg>
    <Gap $w={11} />
    <svg width="22" height="22" viewBox="0 0 22 22" fill="none">
      <circle cx="7.500" cy="9" r="6" fill="#dce8ea" stroke="#666" strokeWidth="1.500" />
      <path d="M12 13.500 16 18" stroke="#444" strokeWidth="3.600" />
      <path d="M14 5H21M17.500 1.500V8.500M14 10.500H21" stroke="#333" strokeWidth="1.300" />
    </svg>
    <Gap $w={11} />
    <svg width="22" height="22" viewBox="0 0 22 22" fill="none">
      <path d="M1 1H20V20H1z" stroke="#444" strokeDasharray="3 2" />
      <ellipse cx="9" cy="9" rx="7.500" ry="8" fill="#dce8ea" stroke="#666" strokeWidth="1.500" />
      <path d="M13.500 14.500 18.500 20" stroke="#444" strokeWidth="4" />
    </svg>
    <Gap $w={5} /><Caret /><Gap $w={17} />
    <svg width="22" height="22" viewBox="0 0 22 22" fill="none">
      <path d="M1 2H20V17H1z" fill="#f2f2f2" stroke="#555" strokeWidth="1.500" />
      <path d="M4 4.500H17V14.500H4z" fill="#93b5db" stroke="#3d5d87" />
      <path d="M8 17V19.500H5.500V21H16V19.500H13.500V17" fill="#ddd" stroke="#555" />
    </svg>
    <Gap $w={2} /><Caret /><Gap $w={8} />
    <svg width="21" height="22" viewBox="0 0 21 22" fill="none">
      <path d="M1 1H20V21H1z" fill="#f4f4f4" stroke="#555" strokeWidth="1.500" />
      <path d="M4.500 1V21M8 1V21M12 1V21M16 1V21M1 5H20M1 9H20M1 13H20M1 17H20" stroke="#777" />
      <path d="M1 12H20V21H1z" fill="#7f91b5" fillOpacity=".3" />
    </svg>
    <Gap $w={2} /><Caret /><Gap $w={8} />
    <svg width="21" height="18" viewBox="0 0 21 18" fill="#a9c4e6" stroke="#45618d" strokeWidth="1.300">
      <path d="M1 1H9.500V8H1zM11 1H19.500V8H11zM1 10H9.500V17H1zM11 10H19.500V17H11z" />
      <path d="M4 3.500H7V6H4zM14 3.500H17V6H14zM4 12.500H7V15H4zM14 12.500H17V15H14z" strokeWidth=".8" />
    </svg>
    <Gap $w={3} /><Caret />
  </NavBar>
);

const TimelineMarks = () => (
  <Pic x={0} y={153} w={320} h={58}>
    <g fill="#494949">
      <path d="M40 215h6v54h-6zM48 242 87 218V267zM132 242 169 218V267zM173 231h7v22h-7zM229 213 273 242 229 271zM318 231h8v22h-8zM330 218 367 242 330 267zM416 218 453 242 416 267zM455 215h6v54h-6z" />
    </g>
    <path d="M581 279V301H849V279M668 279V301M758 279V301" stroke="#c9c9c9" strokeWidth="7" />
    <path d="M803 193H893V283H803z" fill={blue} />
    {[0, 271].map((x) => (
      <g key={x} transform={`translate(${x} 0)`}>
        <path d="M556 212H594M551 220V254M556 262H580M600 220V240" stroke={x ? "#47687c" : "#666"} strokeWidth="4" />
        <path d="M546 207h9v9h-9zM595 207h9v9h-9zM546 257h9v9h-9z" fill="#2186dd" />
        <path d="M584 260 600 246" stroke="#fbb738" strokeWidth="12" />
        <path d="M600 246 607 240" stroke="#ec3c4a" strokeWidth="10" />
        <path d="M577 267 581 256 588 264z" fill="#555" />
      </g>
    ))}
    {[0, 90].map((x) => (
      <g key={x} transform={`translate(${x} 0)`}>
        <path d="M638 258H670L683 246V254L670 266H638z" fill="#a5a5a5" />
        <path d="M638 219H670V254H638z" fill="#68b0e5" />
        <path d="M638 219 649 208H683L670 219z" fill="#86cbfa" />
        <path d="M670 219 683 208V243L670 254z" fill="#4090c8" />
        <path d="M692 257V214" stroke="#333" strokeWidth="4" />
        <path d="M692 208 699 220H685z" fill="#333" />
      </g>
    ))}
    <path d="M870 186H915V202L897 218V305H889V218L870 202z" fill="#666" />
  </Pic>
);

const QuickIcons = () => (
  <Pic x={0} y={87} w={246} h={40}>
    <path d="M33 120h16v16H33zM52 120h16v16H52zM71 120h16v16H71zM33 139h16v16H33zM52 139h16v16H52zM71 139h16v16H71zM33 158h16v16H33zM52 158h16v16H52zM71 158h16v16H71z" fill="#636363" />
    <path d="M157 118H188V136H207V177H157zM192 117 207 132H192z" fill="#636363" />
    <path d="M229 136H255L242 155zM533 136H559L546 155z" fill="#555" />
    <path d="M327 121H379V174H337L327 165z" fill="#636363" />
    <path d="M337 126H370V145H337zM341 155H366V174H341z" fill="#cbcbcb" />
    <path d="M341 129h7v11h-7zM353 129h7v11h-7zM347 160h6v14h-6z" fill="#636363" />
    <path d="M474 128 455 143 474 160M456 143Q496 138 496 170" stroke="#5d5d5d" strokeWidth="7" />
    <g stroke="#8e8e8e" strokeWidth="6"><path d="M634 128 652 143 634 160M651 143Q609 140 609 170" /></g>
    <path d="M687 136H713L700 155z" fill="#8e8e8e" />
  </Pic>
);

const FusionLogo = ({ size, tag }: { size: number; tag?: boolean }) => (
  <svg width={size} height={size} viewBox="0 0 30 30">
    <path d="M0 0H30V30H0z" fill="#fbe6d3" />
    <path d="M0 18 12 14V30H0z" fill="#f5c9a0" />
    <path d="M9 3H22V8.500H14V12H20V17H14V24L9 21z" fill="#d97a1e" />
    <path d="M9 3 14 8.500V24L9 21z" fill="#a3510f" />
    {tag ? <text x="15" y="28" fontSize="6.500" fontWeight="700" fontFamily="Liberation Sans" fill="#e77d1d">360</text> : <path d="M17 26H26V28.500H17z" fill="#f2a55c" />}
  </svg>
);

const purple = "#bf93f5";

const TaskIcons = () => (
  <>
    <TaskButton><svg width="22" height="22" viewBox="0 0 22 22"><circle cx="11" cy="11" r="8.300" fill="none" stroke="#fff" strokeWidth="2.600" /></svg></TaskButton>
    <TaskButton>
      <svg width="24" height="22" viewBox="0 0 24 22" fill="none" stroke="#fff" strokeWidth="1.400">
        <path d="M1 1V5H13V1M1 21V17H13V21M2 7.500H12V14.500H2zM18.500 1V5M18.500 11V21" /><path d="M17 7.500h3v3h-3z" fill="#fff" stroke="none" />
      </svg>
    </TaskButton>
    <TaskButton>
      <svg width="32" height="32" viewBox="0 0 32 32">
        <path d="M2 1H30L31 6V26L30 31H2L1 26V6z" fill="#161616" />
        <path d="M8 25V8L12 7 21 20V7L24 8V24L21 26 11 12V24z" fill="#777" stroke="#444" />
      </svg>
    </TaskButton>
    <TaskButton>
      <svg width="32" height="30" viewBox="0 0 32 30">
        <circle cx="17.500" cy="6" r="4.600" fill="#7b83eb" /><circle cx="26" cy="7.500" r="3.200" fill="#5059c9" />
        <path d="M21 12H31V20Q30 25 25 24z" fill="#5059c9" />
        <path d="M11 12H24V21Q23 28 17 28T11 22z" fill="#7b83eb" />
        <path d="M1 7.500H17V23H1z" fill="#4b53bc" />
        <path d="M5.500 11.500H13M9.200 11.500V19.500" stroke="#fff" strokeWidth="2" />
      </svg>
    </TaskButton>
    <TaskButton $bar={purple}>
      <svg width="29" height="24" viewBox="0 0 29 24">
        <path d="M0 1Q0 0 1 0H11L14 3H0z" fill="#dc9a12" /><path d="M0 4 12 4 14 2H28V23H0z" fill="#ffd567" />
        <path d="M6 24V15Q6 13 8 13H21Q23 13 23 15V24H18V18.500H11V24z" fill="#3e97d8" />
      </svg>
    </TaskButton>
    <TaskButton $bar={purple}>
      <svg width="29" height="29" viewBox="-14.500 -14.500 29 29">
        <circle r="14" fill="#fbc62f" />
        <path d="M-12.100-7A14 14 0 0 1 12.100-7H0L-6 3.500z" fill="#db4437" />
        <path d="M-12.100-7A14 14 0 0 0 0 14L6 3.500-6 3.500z" fill="#1ba05c" />
        <circle r="6.800" fill="#fff" /><circle r="5.400" fill="#4a86f0" />
      </svg>
    </TaskButton>
    <TaskButton $fill="#b2692d" $bar="#ff7800" $w={62}>
      <svg width="27" height="27" viewBox="0 0 27 27"><path d="M0 1H27V15L16 27H0z" fill="#ffdc0a" /><path d="M14 15H27L14 27z" fill="#3a3a3a" /><path d="M27 15 16 27H27z" fill="#b2692d" /></svg>
    </TaskButton>
    <TaskButton $bar={purple}>
      <svg width="30" height="30" viewBox="0 0 30 30">
        <rect x="1" y="2" width="24" height="24" rx="4" fill="#6f85d0" />
        <path d="M5 19Q4 12 8 8L12 8.500H15L19 8Q22 12 21 19L17 21 15.500 19H10.500L9 21z" fill="#fff" />
        <circle cx="10" cy="14.500" r="2" fill="#6f85d0" /><circle cx="16" cy="14.500" r="2" fill="#6f85d0" />
        <circle cx="21" cy="21" r="9" fill="#ee5158" /><circle cx="21" cy="21" r="3.600" fill="#fff" />
      </svg>
    </TaskButton>
    <TaskButton $bar={purple}>
      <svg width="28" height="28" viewBox="0 0 28 28">
        <path d="M1 27 3 20A13 13 0 1 1 8 25.500Z" fill="#fff" /><circle cx="14.500" cy="13.500" r="11" fill="#20bd52" />
        <path d="M3.500 24.500 5 19 9 23z" fill="#20bd52" />
        <path d="M9 8.500Q10.500 6.500 12 8.500L13 11 11.500 12.800Q13.500 16 16.500 17L18 15.300 21 16.800Q21.500 18.500 19 19.800 17 20.500 13 17.800 8 13.500 9 8.500Z" fill="#fff" />
      </svg>
    </TaskButton>
    <TaskButton $fill="#63615d" $bar={purple} $w={62}><FusionLogo size={30} tag /></TaskButton>
    <TaskButton $bar={purple}>
      <svg width="28" height="28" viewBox="0 0 28 28">
        <path d="M0 0H28V28H0z" fill="#21a4ec" /><path d="M28 8V28H14L20 14z" fill="#7583e0" />
        <path d="M0 18 9 9 22 28H0z" fill="#0f4b93" /><path d="M14 17 19 12 28 22V28H21z" fill="#1565c0" /><circle cx="18.500" cy="6.500" r="2.800" fill="#fff" />
      </svg>
    </TaskButton>
  </>
);

export default function App() {
  return (
    <Screen>
      <Global />
      <TitleBar>
        <FusionLogo size={20} />
        <TitleText>Autodesk Fusion 360 (Education License)</TitleText>
        <Spring />
        <Pic x={1020} y={0} w={160} h={29}>
          <path d="M1035 40.500H1071M1210.500 31.500H1237.500V58.500H1210.500zM1216.500 31V25.500H1243.500V52.500H1238M1387 25 1421 59M1421 25 1387 59" stroke="#777" strokeWidth="3" />
        </Pic>
      </TitleBar>

      <AppBar>
        <QuickAccess><QuickIcons /></QuickAccess>
        <DocTab>
          <Pic x={1256} y={124} w={21} h={20}>
            <path d="M1256 131 1286 125 1316 131V168L1286 182 1256 168z" fill="#606060" />
            <path d="M1258 134 1286 143V180L1258 167z" fill="#b4b4b4" />
          </Pic>
          <Gap $w={4} />
          <Label $size={15}>sketch 1 v1*</Label>
          <Spring />
          <svg width="13" height="13" viewBox="0 0 13 13"><path d="M1.500 1.500 11.500 11.500M11.500 1.500 1.500 11.500" stroke="#6e6e6e" strokeWidth="2" /></svg>
        </DocTab>
        <NewTab><svg width="17" height="17" viewBox="0 0 17 17"><path d="M8.500 0V17M0 8.500H17" stroke="#757575" strokeWidth="4" /></svg></NewTab>
        <AppIcons>
          <Pic x={988} y={116} w={105} h={21}>
            <circle cx="1020" cy="147" r="30" fill="#606060" />
            <path d="M1002 166 1020 148" stroke="#e0e0e0" strokeWidth="9" />
            <path d="M1031 128A15 15 0 1 0 1043 140L1034 147 1025 145 1023 136Z" fill="#e0e0e0" />
            <circle cx="1144" cy="147" r="28" stroke="#606060" strokeWidth="3" />
            <circle cx="1144" cy="147" r="23" fill="#606060" />
            <path d="M1144 131V149H1158" stroke="#e4e4e4" strokeWidth="5" />
            <circle cx="1267" cy="147" r="30" fill="#606060" />
            <path d="M1256 139Q1257 129 1268 129 1279 130 1279 139 1279 145 1268 150V156M1268 161V168" stroke="#e4e4e4" strokeWidth="7" />
          </Pic>
          <Avatar><Label $size={14} $track={-0.8}>XL</Label></Avatar>
        </AppIcons>
      </AppBar>

      <Ribbon>
        <Workspace><Label $bold $track={-0.5} $size={13}>DESIGN</Label><Caret $s={4} /></Workspace>
        <RibbonMain>
          <TabRow>
            <RibbonTab $w={70} $on><Label $bold $track={-0.2} $color={blue}>SOLID</Label></RibbonTab>
            <RibbonTab $w={142}><Label $track={-0.55}>SURFACE</Label></RibbonTab>
            <RibbonTab $w={118}><Label $track={-0.6}>SHEET METAL</Label></RibbonTab>
            <RibbonTab $w={122}><Label>TOOLS</Label></RibbonTab>
          </TabRow>
          <Groups>
            <Group $w={324}><CreateTools /><GroupName $shift={-2}><Label $track={-0.7}>CREATE</Label><Caret $s={4} /></GroupName></Group>
            <Divider $m="3px 6px 0 4px" />
            <Group $w={324}><ModifyTools /><GroupName $shift={-3}><Label $track={-0.4}>MODIFY</Label><Caret $s={4} /></GroupName></Group>
            <Divider $m="3px 6px 0 4px" />
            <Group $w={108}><AssembleTools /><GroupName $shift={-1}><Label $track={-0.25}>ASSEMBLE</Label><Caret $s={4} /></GroupName></Group>
            <Divider $m="3px 5px 0 5px" />
            <Group $w={112}>
              <Tools>
                <Tool x={195}>
                  <path d="M252 424H222V340L252 310H286" fill="#dcdcdc" {...line} />
                  <path d="M224 340 253 312H287L256 342z" fill="#f6f6f6" />
                  <path d="M255 342 288 310V392L255 424z" fill="#56c57c" stroke="#3bae62" strokeWidth="2" />
                  <path d="M300 342 334 310V392L300 424z" fill="#e39563" stroke="#d2824e" strokeWidth="2" />
                </Tool>
              </Tools>
              <GroupName><Label $track={-0.5}>CONSTRUCT</Label><Caret $s={4} /></GroupName>
            </Group>
            <Divider $m="3px 4px 0 4px" />
            <Group $w={91}>
              <Tools>
                <Tool x={531}>
                  <path d="M560 338V372M662 338V372M570 355H652" stroke="#777" strokeWidth="4" />
                  <path d="M564 355 578 346V364zM658 355 644 346V364z" fill="#666" />
                  <path d="M559 376H663V398H559z" fill="#f9a50a" stroke="#d98c00" strokeWidth="2" />
                  <path d="M565 376v9M577 376v6M589 376v9M601 376v6M613 376v9M625 376v6M637 376v9M649 376v6M657 376v9" stroke="#7b5200" strokeWidth="3" />
                </Tool>
              </Tools>
              <GroupName $shift={-1}><Label $track={-0.75}>INSPECT</Label><Caret $s={4} /></GroupName>
            </Group>
            <Divider $m="3px 4px 0 3px" />
            <Group $w={74}>
              <Tools>
                <Tool x={806}>
                  <path d="M833 313H941V421H833z" fill="#80caff" stroke="#4492cf" strokeWidth="3" />
                  <path d="M835 387Q850 355 868 357 880 358 900 394 912 378 922 381 932 382 940 396V420H835z" fill="#3f93d0" />
                  <circle cx="911" cy="342" r="13" fill="#fffbc9" />
                </Tool>
              </Tools>
              <GroupName $shift={2}><Label $track={-0.6}>INSERT</Label><Caret $s={4} /></GroupName>
            </Group>
            <Divider $m="3px 3px 0 6px" />
            <Group $w={86}>
              <Tools>
                <Tool x={1077}>
                  <path d="M1100 310H1203V388H1100z" stroke="#31b55c" strokeWidth="4" strokeDasharray="16 7" />
                  <path d="M1179 364V412L1190 403 1198 427 1207 423 1199 400H1216z" fill="#fff" stroke="#4b4b4b" strokeWidth="4" />
                </Tool>
              </Tools>
              <GroupName><Label $track={-0.4}>SELECT</Label><Caret $s={4} /></GroupName>
            </Group>
          </Groups>
        </RibbonMain>
      </Ribbon>

      <Canvas>
        <Overlay $x={490} $y={208}><Model /></Overlay>
        <Overlay $x={5} $y={4}>
          <PanelBar>
            <svg width="13" height="8" viewBox="0 0 13 8"><path d="M0 4 6.500 0V8zM6 4 12.500 0V8z" fill="#333" /></svg>
            <Gap $w={11} />
            <Label $track={-0.3} $color="#6a6a6a">BROWSER</Label>
            <Spring />
            <RoundSign /><Gap $w={8} /><Grip />
          </PanelBar>
          <BrowserTree />
        </Overlay>
        <Overlay $x={5} $y={759}>
          <PanelBar $open>
            <Gap $w={24} />
            <Label $track={-0.6} $color="#6a6a6a">COMMENTS</Label>
            <Spring />
            <RoundSign plus /><Gap $w={8} /><Grip />
          </PanelBar>
        </Overlay>
        <Overlay $x={793} $y={413}>
          <MiniInput>
            <svg width="6" height="24" viewBox="0 0 6 24"><path d="M1 2 5 0M1 6 5 4M1 10 5 8M1 14 5 12M1 18 5 16M1 22 5 20" stroke="#c6c6c6" /></svg>
            <MiniField><Marked>2 mm</Marked></MiniField>
            <Caret />
          </MiniInput>
        </Overlay>
        <Overlay $x={801} $y={761}><NavTools /></Overlay>
        <Overlay $x={1797} $y={11}><ViewCube /></Overlay>
        <Overlay $x={1706} $y={392}><Hint>Specify distance, or select coplanar pr</Hint></Overlay>
        <Overlay $x={1263} $y={128}><ExtrudeDialog /></Overlay>
        <Overlay $x={1770} $y={768}><Label $bold $size={14} $track={-0.1}>Multiple selections</Label></Overlay>
      </Canvas>

      <Timeline>
        <TimelineMarks />
        <Spring />
        <Pic x={0} y={-60} w={36} h={50}>
          <g transform="translate(30 30) scale(3)"><GearShape /></g>
        </Pic>
      </Timeline>

      <Taskbar>
        <Start>
          <svg width="20" height="20" viewBox="0 0 20 20"><path d="M0 3 8 1.700V9.500H0zM9 1.500 20 0V9.500H9zM0 10.500H8V18.300L0 17zM9 10.500H20V20L9 18.500z" fill="#fff" /></svg>
        </Start>
        <Search>
          <svg width="21" height="21" viewBox="0 0 21 21" fill="none" stroke="#222" strokeWidth="1.600"><circle cx="13.500" cy="7.500" r="6.600" /><path d="M8.800 12.200.8 20.200" /></svg>
          Type here to search
        </Search>
        <TaskIcons />
        <Spring />
        <TrayIcons>
          <Pic x={214} y={331} w={90} h={50}>
            <path d="M216 416 240 392 264 416" stroke="#fff" strokeWidth="4" />
            <path d="M302 396H311L321 386V425L311 415H302zM332 399Q338 406 332 413M341 392Q350 406 341 420" stroke="#fff" strokeWidth="3.500" />
            <path d="M349 382Q366 406 349 430" stroke="#888" strokeWidth="3.500" />
            <path d="M392 382H478V430H392z" stroke="#fff" strokeWidth="3.500" />
            <path d="M401 394H470M401 406H470" stroke="#fff" strokeWidth="4" strokeDasharray="4 4" />
            <path d="M401 419h6M414 419H453M461 419h8" stroke="#fff" strokeWidth="4" />
          </Pic>
        </TrayIcons>
        <Tray>
          <Language>ENG</Language>
          <Clock>2:49 PM<br />19/11/2020</Clock>
          <svg width="60" height="50" viewBox="0 0 60 50">
            <path d="M8 15H28V32H18L14 36V32H8z" fill="#fff" />
            <path d="M12 20H24M12 24H24M12 28H20" stroke="#444" strokeWidth="1.300" />
            <circle cx="28" cy="34.500" r="10" fill="#383631" stroke="#9a9a98" />
            <text x="28" y="40" textAnchor="middle" fontFamily="Open Sans" fontWeight="600" fontSize="14" fill="#fff">6</text>
            <path d="M53.500 0V50" stroke="#85837f" />
          </svg>
        </Tray>
      </Taskbar>
    </Screen>
  );
}
